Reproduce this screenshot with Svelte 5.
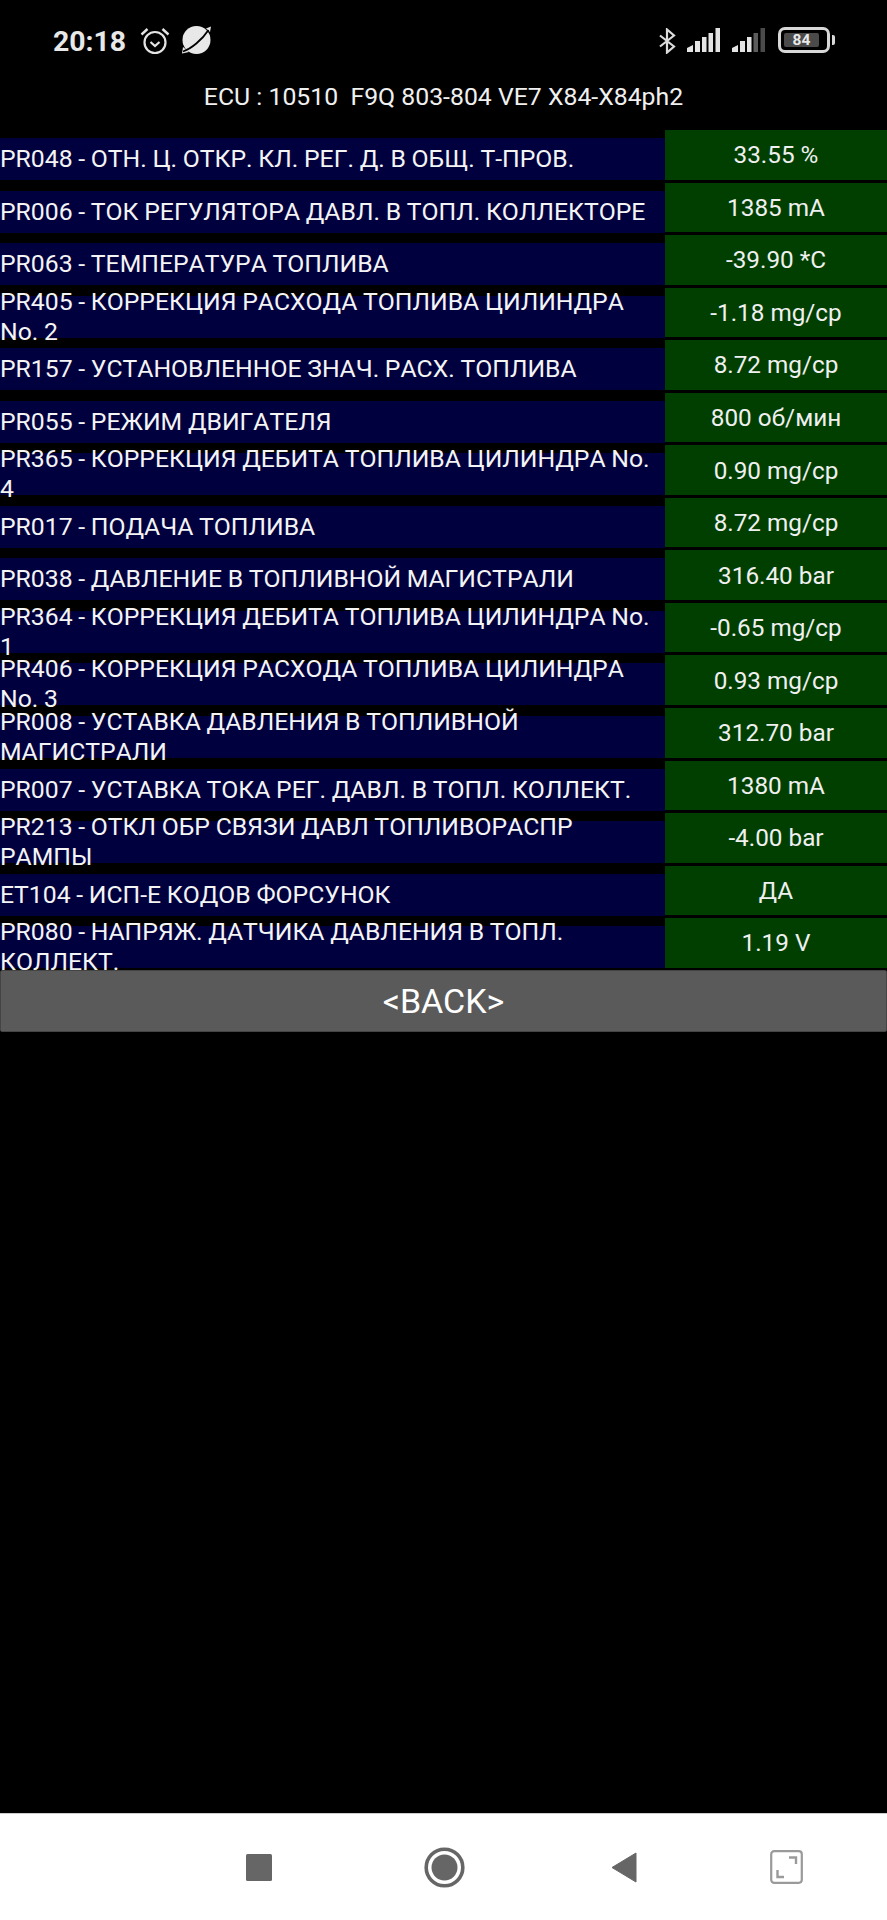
<script>
    const ecu = "ECU : 10510  F9Q 803-804 VE7 X84-X84ph2";
    const rows = [
        ["PR048 - ОТН. Ц. ОТКР. КЛ. РЕГ. Д. В ОБЩ. Т-ПРОВ.", "33.55 %"],
        ["PR006 - ТОК РЕГУЛЯТОРА ДАВЛ. В ТОПЛ. КОЛЛЕКТОРЕ", "1385 mA"],
        ["PR063 - ТЕМПЕРАТУРА ТОПЛИВА", "-39.90 *C"],
        ["PR405 - КОРРЕКЦИЯ РАСХОДА ТОПЛИВА ЦИЛИНДРА No. 2", "-1.18 mg/cp"],
        ["PR157 - УСТАНОВЛЕННОЕ ЗНАЧ. РАСХ. ТОПЛИВА", "8.72 mg/cp"],
        ["PR055 - РЕЖИМ ДВИГАТЕЛЯ", "800 об/мин"],
        ["PR365 - КОРРЕКЦИЯ ДЕБИТА ТОПЛИВА ЦИЛИНДРА No. 4", "0.90 mg/cp"],
        ["PR017 - ПОДАЧА ТОПЛИВА", "8.72 mg/cp"],
        ["PR038 - ДАВЛЕНИЕ В ТОПЛИВНОЙ МАГИСТРАЛИ", "316.40 bar"],
        ["PR364 - КОРРЕКЦИЯ ДЕБИТА ТОПЛИВА ЦИЛИНДРА No. 1", "-0.65 mg/cp"],
        ["PR406 - КОРРЕКЦИЯ РАСХОДА ТОПЛИВА ЦИЛИНДРА No. 3", "0.93 mg/cp"],
        ["PR008 - УСТАВКА ДАВЛЕНИЯ В ТОПЛИВНОЙ МАГИСТРАЛИ", "312.70 bar"],
        ["PR007 - УСТАВКА ТОКА РЕГ. ДАВЛ. В ТОПЛ. КОЛЛЕКТ.", "1380 mA"],
        ["PR213 - ОТКЛ ОБР СВЯЗИ ДАВЛ ТОПЛИВОРАСПР РАМПЫ", "-4.00 bar"],
        ["ET104 - ИСП-Е КОДОВ ФОРСУНОК", "ДА"],
        ["PR080 - НАПРЯЖ. ДАТЧИКА ДАВЛЕНИЯ В ТОПЛ. КОЛЛЕКТ.", "1.19 V"],
    ];
</script>

<div class="screen">
    <div class="status">
        <span class="time">20:18</span>
        <svg class="alarm" width="30" height="28" viewBox="0 0 30 28" fill="none" stroke="#e4e4e4">
            <circle cx="15" cy="15.5" r="10.5" stroke-width="2.2" />
            <path d="M10.5 15l4.5 4 4.5-4" stroke-width="2.2" />
            <path d="M1.5 7.5L7.5 2M28.5 7.5L22.5 2" stroke-width="2.4" />
        </svg>
        <svg class="planet" width="31" height="30" viewBox="0 0 31 30">
            <circle cx="15.5" cy="15" r="14" fill="#e8e8e8" />
            <path d="M25 3.5L30 1.5L29 7ZM2 22L1 28.5L8 27Z" fill="#e8e8e8" />
            <path d="M2 26.5C10 24 21 15 27.5 5" fill="none" stroke="#000" stroke-width="1.8" />
        </svg>
        <span class="grow"></span>
        <svg class="bt" width="17" height="26" viewBox="0 0 17 26" fill="none" stroke="#dcdcdc" stroke-width="2.2">
            <path d="M1 7.5L15 18.5L8 24.5V1.5L15 7.5L1 18.5" />
        </svg>
        <svg class="signal" width="34" height="24" viewBox="0 0 34 24" fill="#e4e4e4">
            <path d="M0 24V20L6 17V24Z" />
            <rect x="8" y="13" width="5" height="11" />
            <rect x="15" y="9" width="4.5" height="15" />
            <rect x="21.5" y="5" width="4.5" height="19" />
            <rect x="28.5" y="0" width="4.5" height="24" />
        </svg>
        <svg class="signal two" width="34" height="24" viewBox="0 0 34 24" fill="#e4e4e4">
            <path d="M0 24V20L6 17V24Z" />
            <rect x="8" y="13" width="5" height="11" />
            <rect x="15" y="9" width="4.5" height="15" />
            <rect x="21.5" y="5" width="4.5" height="19" fill="#5c5c5c" />
            <rect x="28.5" y="0" width="4.5" height="24" fill="#4a4a4a" />
        </svg>
        <div class="battery">
            <div class="cell"><span class="level">84</span></div>
            <span class="tip"></span>
        </div>
    </div>

    <div class="ecu">{ecu}</div>

    <div class="table">
        {#each rows as row}
            <div class="row">
                <div class="label"><span>{row[0]}</span></div>
                <div class="value">{row[1]}</div>
            </div>
        {/each}
    </div>

    <button class="back">&lt;BACK&gt;</button>

    <div class="grow"></div>

    <div class="nav">
        <svg class="recent" width="27" height="27" viewBox="0 0 27 27"><rect width="26" height="27" rx="1.5" fill="#666" /></svg>
        <svg class="home" width="41" height="41" viewBox="0 0 41 41">
            <circle cx="20.5" cy="20.5" r="18.3" fill="none" stroke="#666" stroke-width="3.6" />
            <circle cx="20.5" cy="20.5" r="13" fill="#666" />
        </svg>
        <svg class="prev" width="26" height="31" viewBox="0 0 26 31"><path d="M1 15.5L25 1V30Z" fill="#666" stroke="#666" stroke-linejoin="round" /></svg>
        <svg class="expand" width="33" height="34" viewBox="0 0 33 34" fill="none" stroke="#9a9a9a">
            <rect x="1.2" y="1.2" width="30.6" height="31.6" rx="3" stroke-width="2.2" />
            <path d="M19 7.5H26V14M7.5 20V27H14" stroke-width="2.4" />
        </svg>
    </div>
</div>

<style>
    :global(body) {
        background: #000;
    }
    .screen {
        display: flex;
        flex-direction: column;
        width: 887px;
        height: 1920px;
        background: #000;
        color: #fff;
        font-family: Roboto, "Noto Sans", sans-serif;
    }
    .grow {
        flex: 1;
    }

    /* status bar */
    .status {
        display: flex;
        align-items: center;
        height: 82px;
        padding: 0 52px 0 53px;
        box-sizing: border-box;
    }
    .time {
        font-size: 28.4px;
        font-weight: 700;
        color: #e8e8e8;
        width: 87px;
    }
    .planet {
        margin-left: 11px;
        margin-top: -3px;
    }
    .alarm {
        margin-top: -1px;
    }
    .bt {
        margin-right: 11px;
    }
    .signal {
        margin-right: 11px;
        margin-top: -2px;
    }
    .signal.two {
        margin-right: 12px;
    }
    .battery {
        display: flex;
        align-items: center;
        margin-top: -2px;
    }
    .cell {
        width: 52px;
        height: 26px;
        box-sizing: border-box;
        border: 3px solid #d8d8d8;
        border-radius: 7px;
        padding: 3px;
    }
    .level {
        display: block;
        width: 35px;
        height: 14px;
        background: #4a4a4a;
        border-radius: 2px;
        font-size: 15.5px;
        font-weight: 700;
        line-height: 14px;
        text-align: center;
        color: #e8e8e8;
    }
    .tip {
        width: 3px;
        height: 10px;
        margin-left: 2px;
        background: #d8d8d8;
        border-radius: 0 2px 2px 0;
    }

    .ecu {
        height: 48px;
        font-size: 24.8px;
        line-height: 30px;
        text-align: center;
        white-space: pre;
        color: #f0f0f0;
    }

    /* parameter list */
    .table {
        display: grid;
        grid-auto-rows: 52.56px;
    }
    .row {
        display: grid;
        grid-template-columns: 665px 222px;
        grid-template-rows: 49.5px;
    }
    .label {
        display: flex;
        align-items: center;
        height: 42px;
        margin-top: 8px;
        background: #00003f;
        font-size: 24.75px;
        font-kerning: none;
        word-spacing: -0.45px;
        line-height: 30px;
        color: #f4f4f4;
    }
    .value {
        display: flex;
        align-items: center;
        justify-content: center;
        background: #003f00;
        font-size: 24.3px;
        box-sizing: border-box;
        color: #f0f0f0;
    }

    .back {
        position: relative;
        height: 62px;
        margin: -1px 0 0;
        padding: 0;
        background: #5a5a5a;
        border: 1px solid #444;
        border-radius: 2px;
        font-family: inherit;
        font-size: 34px;
        color: #fff;
    }

    /* navigation bar */
    .nav {
        display: flex;
        align-items: center;
        height: 106px;
        background: #fff;
        border-top: 1px solid #ccc;
        padding-left: 246px;
    }
    .home {
        margin-left: 151px;
    }
    .prev {
        margin-left: 146px;
    }
    .expand {
        margin-left: 133px;
    }
</style>
